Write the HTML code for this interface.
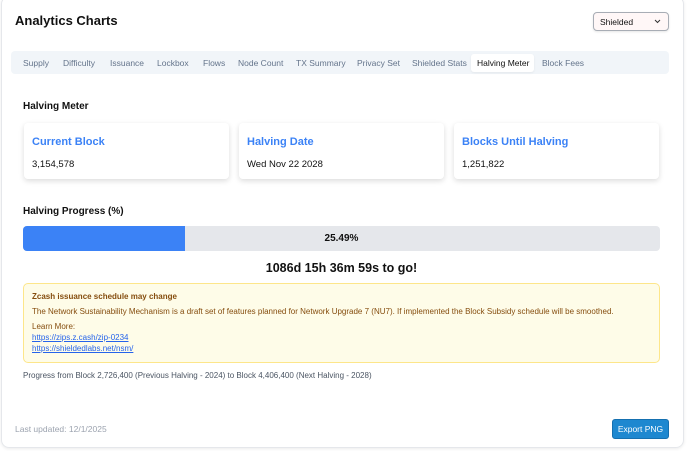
<!DOCTYPE html>
<html><head><meta charset="utf-8"><style>
*{box-sizing:border-box;margin:0;padding:0}
body{width:690px;height:451px;background:#fff;font-family:"Liberation Sans",sans-serif;position:relative;overflow:hidden;color:#111}
.outer{position:absolute;left:1px;top:-4px;width:683px;height:452px;border:1px solid #e5e7eb;border-radius:8px;box-shadow:0 1px 3px rgba(0,0,0,.08)}
.a{position:absolute;white-space:nowrap}
.title{left:15px;top:13px;font-size:13px;font-weight:bold}
.sel{left:593px;top:12px;width:76px;height:19px;border:1px solid #a8adb5;border-radius:4px;background:#fff7f7;font-size:8.5px;padding:4px 0 0 6px;box-shadow:0 1px 2px rgba(0,0,0,.1)}
.sel svg{position:absolute;right:7px;top:6px}
.tabs{left:11px;top:51px;width:658px;height:23px;background:#f1f5f9;border-radius:4px}
.tab{position:absolute;top:58px;font-size:8.5px;color:#64748b}
.act{left:471px;top:54px;width:63px;height:18px;background:#fff;border-radius:3px;box-shadow:0 1px 2px rgba(0,0,0,.06)}
.h{font-size:10px;font-weight:bold}
.card{position:absolute;top:123px;height:56px;width:205px;background:#fff;border-radius:4px;box-shadow:0 2px 6px rgba(0,0,0,.14)}
.card .t{position:absolute;left:8px;top:13px;font-size:11px;color:#3b82f6;font-weight:bold}
.card .v{position:absolute;left:8px;top:36px;font-size:9.5px}
.bar{left:23px;top:226px;width:637px;height:25px;background:#e5e7eb;border-radius:4px;overflow:hidden}
.fill{position:absolute;left:0;top:0;width:162px;height:25px;background:#3b82f6}
.note{left:23px;top:283px;width:637px;height:80px;background:#fefce8;border:1px solid #fde68a;border-radius:5px}
.n{font-size:8px;color:#854d0e}
.lk{font-size:8px;color:#2563eb;text-decoration:underline}
.btn{left:612px;top:419px;width:57px;height:20px;background:#1e88d0;border:1px solid #1570b0;border-radius:3px;color:#fff;font-size:8.5px;text-align:center;line-height:18px}
</style></head><body>
<div class="outer"></div>
<div class="a title">Analytics Charts</div>
<div class="a sel">Shielded<svg width="7" height="5" viewBox="0 0 7 5"><path d="M1 1l2.5 2.5L6 1" stroke="#333" fill="none" stroke-width="1"/></svg></div>
<div class="a tabs"></div>
<div class="a act"></div>
<div class="tab" style="left:23px">Supply</div>
<div class="tab" style="left:63px">Difficulty</div>
<div class="tab" style="left:110px">Issuance</div>
<div class="tab" style="left:157px">Lockbox</div>
<div class="tab" style="left:203px">Flows</div>
<div class="tab" style="left:238px">Node Count</div>
<div class="tab" style="left:296px">TX Summary</div>
<div class="tab" style="left:357px">Privacy Set</div>
<div class="tab" style="left:412px">Shielded Stats</div>
<div class="tab" style="left:477px;color:#111">Halving Meter</div>
<div class="tab" style="left:542px">Block Fees</div>
<div class="a h" style="left:23px;top:101px">Halving Meter</div>
<div class="card" style="left:24px"><div class="t">Current Block</div><div class="v">3,154,578</div></div>
<div class="card" style="left:239px"><div class="t">Halving Date</div><div class="v">Wed Nov 22 2028</div></div>
<div class="card" style="left:454px"><div class="t">Blocks Until Halving</div><div class="v">1,251,822</div></div>
<div class="a h" style="left:23px;top:206px">Halving Progress (%)</div>
<div class="a bar"><div class="fill"></div></div>
<div class="a" style="left:23px;width:637px;top:233px;text-align:center;font-size:10px;font-weight:bold">25.49%</div>
<div class="a" style="left:23px;width:637px;top:261px;text-align:center;font-size:12.5px;font-weight:bold">1086d 15h 36m 59s to go!</div>
<div class="a note"></div>
<div class="a n" style="left:32px;top:292px;font-weight:bold">Zcash issuance schedule may change</div>
<div class="a n" style="left:32px;top:307px">The Network Sustainability Mechanism is a draft set of features planned for Network Upgrade 7 (NU7). If implemented the Block Subsidy schedule will be smoothed.</div>
<div class="a n" style="left:32px;top:322px">Learn More:</div>
<div class="a lk" style="left:32px;top:333px">https://zips.z.cash/zip-0234</div>
<div class="a lk" style="left:32px;top:344px">https://shieldedlabs.net/nsm/</div>
<div class="a" style="left:23px;top:371px;font-size:8px;color:#4b5563">Progress from Block 2,726,400 (Previous Halving - 2024) to Block 4,406,400 (Next Halving - 2028)</div>
<div class="a" style="left:15px;top:424px;font-size:8.5px;color:#9ca3af">Last updated: 12/1/2025</div>
<div class="a btn">Export PNG</div>
</body></html>
